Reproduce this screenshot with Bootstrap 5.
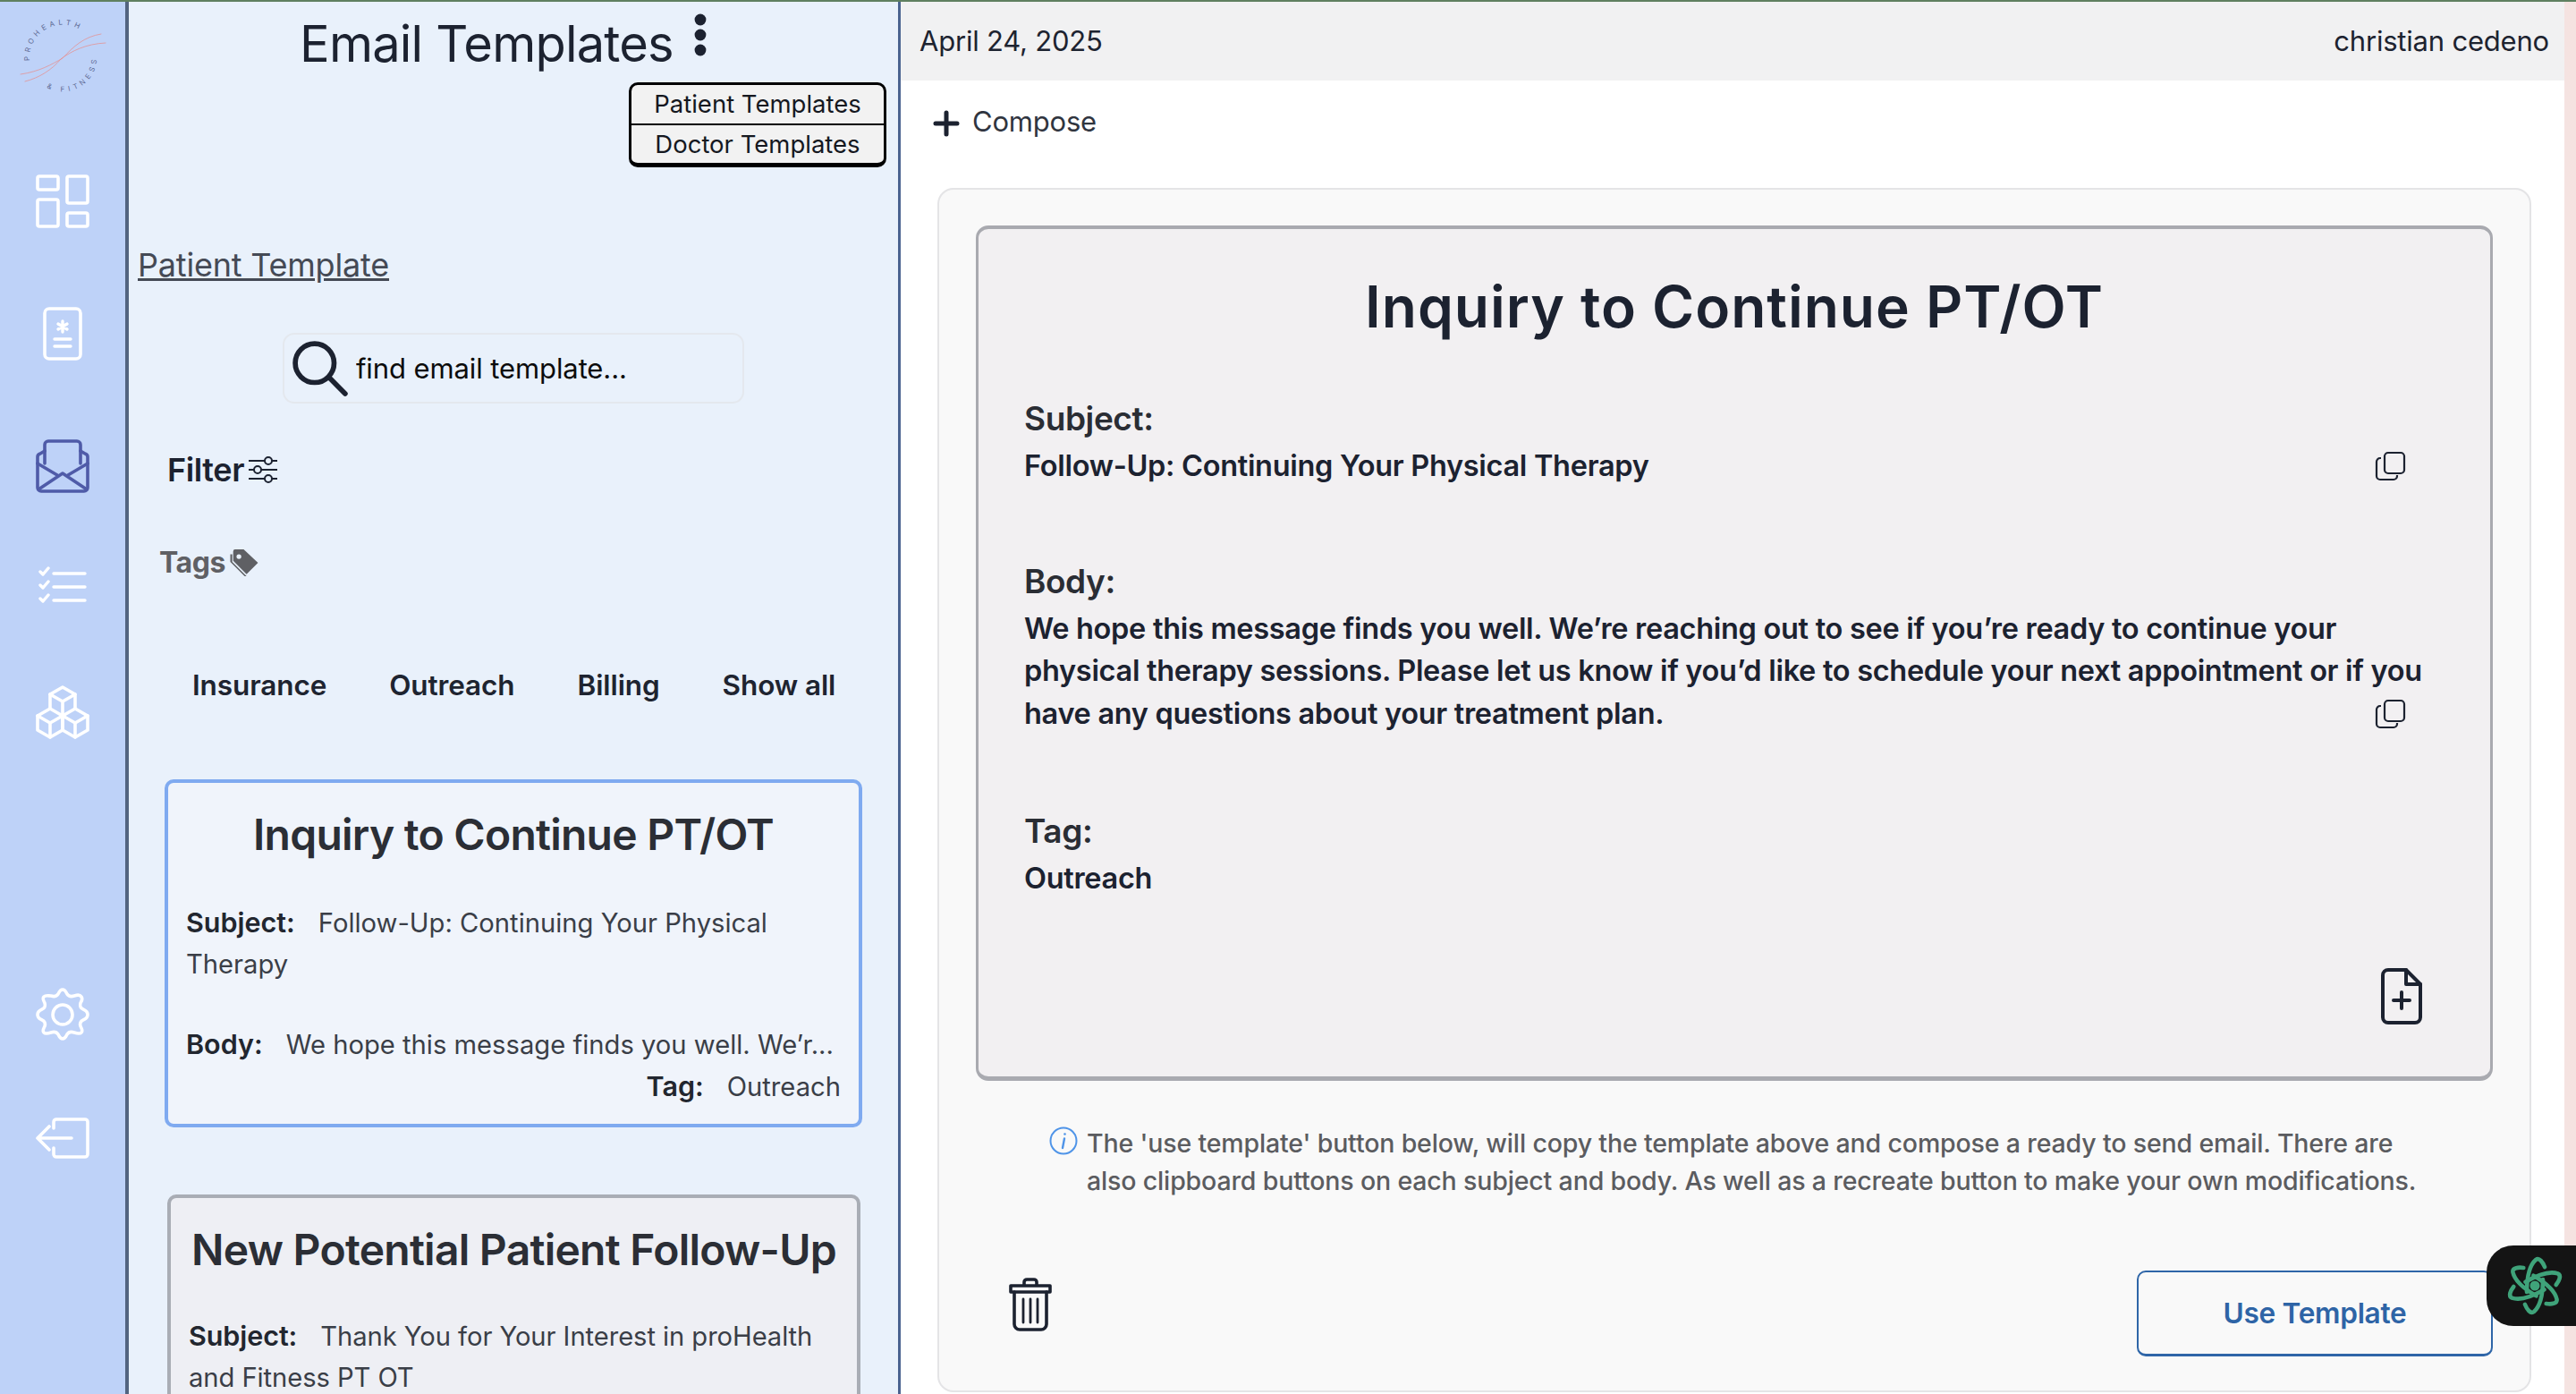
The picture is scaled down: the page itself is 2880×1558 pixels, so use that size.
<!DOCTYPE html>
<html lang="en">
<head>
<meta charset="utf-8">
<title>Email Templates</title>
<link href="https://cdn.jsdelivr.net/npm/bootstrap@5.3.0/dist/css/bootstrap.min.css" rel="stylesheet">
<style>
html,body{height:100%;margin:0;overflow:hidden}
body{font-family:Inter,"Liberation Sans",sans-serif;color:#1c2230;background:#fff}
.app-shell{height:1558px;border-top:2px solid #5f8060;overflow:hidden;position:relative}
.rail{width:144px;flex:none;background:#bed2f8;border-right:4px solid #536480;padding-top:20px;display:flex;flex-direction:column;align-items:center}
.rail svg{display:block;flex:none}
.rail .logo-mark{margin-bottom:88px;overflow:visible}
.rail .rail-icon{fill:none;stroke:#fff;stroke-width:3.6;stroke-linecap:round;stroke-linejoin:round;margin-bottom:88px}
.rail .rail-icon.is-active{stroke:#4f5ba8;margin-bottom:81px}
.rail .rail-gap{margin-bottom:278px}
.rail .rail-gear{margin-bottom:85px}
.middle{width:863px;flex:none;background:#e9f1fb;border-right:3px solid #4a6390;overflow:hidden;padding:0 12px 0 10px}
.page-title{font-size:56px;font-weight:400;line-height:66px;margin:14px 0 0;letter-spacing:-.8px}
.title-row{height:78px;padding-right:21px}
.dots{margin:13px 0 0 23px}
.tpl-menu{width:288px;margin:12px 0 0 549px;border:3px solid #000;border-bottom-width:5px;border-radius:10px;overflow:hidden;background:#f2f2f2}
.tpl-menu .list-group-item{background:transparent;border:0;border-radius:0;padding:0;height:43px;line-height:42px;text-align:center;font-size:27.5px;color:#15181f}
.tpl-menu .list-group-item+.list-group-item{border-top:2px solid #000;height:44px}
.section-link{display:inline-block;font-size:36px;line-height:46px;color:#454a55;margin-top:86px;letter-spacing:-.2px}
.finder{width:516px;height:79px;margin:53px 0 0 162px;border:2px solid #e4e8ee;border-radius:13px;padding-left:9px}
.finder svg{flex:none}
.finder input{border:0;background:transparent;box-shadow:none;font-size:31px;padding:0 0 0 9px;height:60px;color:#000;font-family:inherit;letter-spacing:-.1px}
.finder input::placeholder{color:#0c0c0c;opacity:1}
.finder input:focus{background:transparent;box-shadow:none}
.filter-label{font-size:36px;font-weight:600;line-height:44px;margin:52px 0 0 33px;letter-spacing:-.4px}
.tags-label{font-size:32px;font-weight:700;line-height:40px;color:#5f6064;margin:62px 0 0 24px;letter-spacing:-.4px}
.tag-row{margin:97px 0 0 61px;gap:70px;font-size:31.5px;font-weight:600;line-height:40px;color:#1e2430;letter-spacing:-.1px}
.tpl-card{border-radius:10px;border-width:4px;border-style:solid}
.tpl-card.sel{width:780px;height:389px;margin:85px 0 0 30px;border-color:#7faaf0;background:#f0f4fb}
.tpl-card.plain{width:775px;height:500px;margin:75px 0 0 33px;border-color:#a9adb5;background:#eeeff4}
.tpl-card h3{font-size:48px;font-weight:600;line-height:58px;color:#2b2e35;text-align:center;margin:29px 0 0;letter-spacing:-.75px;white-space:nowrap}
.tpl-lines{font-size:29.2px;line-height:46px;padding:0 20px;color:#3a3e47;margin-top:46px}
.tpl-card.plain .tpl-lines{margin-top:44px;letter-spacing:-.07px}
.tpl-lines b{font-size:30.5px;font-weight:600;color:#22262f;margin-right:26px}
.tpl-lines .gap-line{margin-top:43px}
.main-col{flex:1;min-width:0;background:#fff}
.edge-strip{width:13px;flex:none;background:#f5e3e1}
.top-strip{height:88px;flex:none;background:#f1f1f2;padding:0 17px 0 21px;font-size:31px;color:#1d2330;letter-spacing:-.2px}
.compose{height:92px;flex:none;padding-left:36px;font-size:31px;color:#30353f;letter-spacing:-.2px}
.compose svg{margin-right:14px;margin-top:4px}
.sheet{margin:28px 37px 0 41px;height:1346px;flex:none;background:#f9f9f9;border:2px solid #e4e4e6;border-radius:18px;padding:40px 41px 0 41px}
.sheet-inner{height:956px;background:#f2f0f2;border:3px solid #a9aab0;border-top-width:4px;border-bottom-width:5px;border-radius:14px;padding:0 51px;position:relative}
.sheet-title{font-size:64px;font-weight:600;line-height:78px;text-align:center;letter-spacing:1px;margin:48px 0 0;color:#1c2230}
.field-h{font-size:37px;font-weight:600;line-height:46px;color:#2a2d34;letter-spacing:-.4px}
.field-v{font-size:32.5px;font-weight:600;line-height:47.6px;color:#1c2230;letter-spacing:-.3px;margin-top:6px}
.gap-subject{margin-top:63px}
.gap-body{margin-top:82px}
.gap-tag{margin-top:85px}
.body-text{max-width:1570px}
.copy-a{flex:none;margin-left:auto;margin-right:42px}
.copy-b{position:absolute;right:42px;bottom:6px}
.recreate{position:absolute;right:76px;bottom:58px}
.info-note{margin:49px 0 0 82px;width:1542px;font-size:28.5px;font-weight:500;line-height:42px;color:#5b5c60;letter-spacing:-.15px}
.info-note svg{margin:2px 10px 0 0;flex:none}
.use-btn{width:398px;height:96px;font-size:31.6px;font-weight:600;border:2px solid #2f66a8;border-bottom-width:3px;border-radius:10px;color:#2e64a6;background:transparent;letter-spacing:-.3px}
.foot-row{margin-top:79px;padding-left:36px}
.assistant{position:absolute;right:0;top:1390px;width:100px;height:90px;background:#141414;border-radius:30px 0 0 30px;display:flex;align-items:center;padding-left:22px}
</style>
</head>
<body>
<div class="app-shell d-flex">
  <aside class="rail">
    <svg class="logo-mark" width="100" height="85" viewBox="-6 0 100 85">
      <defs>
        <path id="ringTop" d="M7 46A37 37 0 0 1 66 13"/>
        <path id="ringLow" d="M26 76A38 38 0 0 0 82 40"/>
      </defs>
      <g fill="none" stroke="#e58f8f" stroke-width="1" stroke-linecap="round" stroke-opacity=".75">
        <path d="M-3 61C18 58 32 50 44 43 56 30 68 19 87 16"/>
        <path d="M2 69C18 65 32 56 42 44 54 35 70 27 92 26"/>
      </g>
      <text font-family="Inter,sans-serif" font-size="8" fill="#5e6a95"><textPath href="#ringTop" textLength="80" lengthAdjust="spacing">PROHEALTH</textPath></text>
      <text font-family="Inter,sans-serif" font-size="8" fill="#5e6a95"><textPath href="#ringLow" textLength="76" lengthAdjust="spacing">&amp; FITNESS</textPath></text>
    </svg>
    <svg class="rail-icon" width="60" height="60" viewBox="0 0 60 60"><rect x="2" y="2" width="23" height="15" rx="2"/><rect x="35" y="2" width="23" height="30" rx="2"/><rect x="2" y="28" width="23" height="30" rx="2"/><rect x="35" y="43" width="23" height="15" rx="2"/></svg>
    <svg class="rail-icon" width="44" height="60" viewBox="0 0 44 60"><rect x="2" y="2" width="40" height="56" rx="5"/><path d="M22 16V28M17 19L27 25M27 19L17 25" stroke-width="3.4"/><path d="M13 36H31M13 44H31" stroke-width="3.4"/></svg>
    <svg class="rail-icon is-active" width="60" height="60" viewBox="0 0 60 60"><path d="M10 27V6a4 4 0 0 1 4-4h32a4 4 0 0 1 4 4v21"/><path d="M10 13 5 16a4 4 0 0 0-3 4v34a4 4 0 0 0 4 4h48a4 4 0 0 0 4-4V20a4 4 0 0 0-3-4l-5-3"/><path d="M2 27 24 40M58 27 36 40M3 56 30 38l27 18"/></svg>
    <svg class="rail-icon" width="54" height="46" viewBox="0 0 54 46"><path d="M2 7 5 10 11 3M2 22 5 25 11 18M2 37 5 40 11 33" stroke-width="3.4"/><path d="M17 9H52M17 24H52M17 39H52" stroke-width="3.4"/></svg>
    <svg class="rail-icon rail-gap" width="60" height="60" viewBox="0 0 60 60"><path d="M30 2 44 10V26L30 34 16 26V10Z"/><path d="M16 10 30 18 44 10M30 18V34"/><path d="M16 26 2 34V50L16 58 30 50V34"/><path d="M2 34 16 42 30 34M16 42V58"/><path d="M44 26 58 34V50L44 58 30 50V34"/><path d="M30 34 44 42 58 34M44 42V58"/></svg>
    <svg class="rail-icon rail-gear" width="60" height="60" viewBox="0 0 60 60"><circle cx="30" cy="30" r="11"/><path d="M30 2c3 0 4 3 5 5 2 3 5 3 8 2 3-1 6-2 8 1s0 5-1 7c-1 3 0 6 3 7 2 1 5 2 5 6s-3 5-5 6c-3 1-4 4-3 7 1 2 3 5 1 7s-5 1-8 0c-3-1-6-1-8 2-1 2-2 5-5 5s-4-3-5-5c-2-3-5-3-8-2-3 1-6 2-8 0s0-5 1-7c1-3 0-6-3-7-2-1-5-2-5-6s3-5 5-6c3-1 4-4 3-7-1-2-3-5-1-7s5-1 8-1c3 1 6 1 8-2 1-2 2-5 5-5Z"/></svg>
    <svg class="rail-icon" width="60" height="46" viewBox="0 0 60 46"><path d="M20 12V5a3 3 0 0 1 3-3h32a3 3 0 0 1 3 3v36a3 3 0 0 1-3 3H23a3 3 0 0 1-3-3v-7"/><path d="M40 23H2M15 10 2 23l13 13"/></svg>
  </aside>

  <section class="middle">
    <div class="title-row d-flex justify-content-center align-items-start">
      <h1 class="page-title">Email Templates</h1>
      <svg class="dots" width="14" height="48" viewBox="0 0 14 48" fill="#1c2230"><circle cx="7" cy="7" r="6.4"/><circle cx="7" cy="24" r="6.4"/><circle cx="7" cy="41" r="6.4"/></svg>
    </div>
    <ul class="list-group tpl-menu">
      <li class="list-group-item">Patient Templates</li>
      <li class="list-group-item">Doctor Templates</li>
    </ul>
    <a href="#" class="section-link">Patient Template</a>
    <div class="finder d-flex align-items-center">
      <svg width="62" height="62" viewBox="0 0 60 60" fill="none" stroke="#1c2230" stroke-linecap="round"><circle cx="24" cy="24" r="21" stroke-width="5.500"/><path d="M40 40 57 57" stroke-width="5.500"/></svg>
      <input class="form-control" type="text" placeholder="find email template...">
    </div>
    <div class="filter-label d-flex align-items-center gap-1">Filter
      <svg width="34" height="30" viewBox="0 0 34 30" fill="none" stroke="#1c2230" stroke-width="2"><path d="M1 5H19M27 5H33M1 15H7M15 15H33M1 25H19M27 25H33"/><circle cx="23" cy="5" r="4"/><circle cx="11" cy="15" r="4"/><circle cx="23" cy="25" r="4"/></svg>
    </div>
    <div class="tags-label d-flex align-items-center gap-1">Tags
      <svg width="35" height="32" viewBox="0 0 32 30" fill="#5f6064"><path d="M6 1H15L30 15 18 27 4 13V3A2 2 0 0 1 6 1ZM10 6a2.500 2.500 0 1 0 0 5 2.500 2.500 0 0 0 0-5Z" fill-rule="evenodd"/><path d="M1 6 1 14 16 29 18 29 3 14 3 6Z"/></svg>
    </div>
    <div class="tag-row d-flex">
      <span>Insurance</span><span>Outreach</span><span>Billing</span><span>Show all</span>
    </div>
    <article class="tpl-card sel">
      <h3>Inquiry to Continue PT/OT</h3>
      <div class="tpl-lines">
        <div><b>Subject:</b>Follow-Up: Continuing Your Physical Therapy</div>
        <div class="gap-line"><b>Body:</b>We hope this message finds you well. We’r...</div>
        <div class="text-end"><b>Tag:</b>Outreach</div>
      </div>
    </article>
    <article class="tpl-card plain">
      <h3>New Potential Patient Follow-Up</h3>
      <div class="tpl-lines">
        <div><b>Subject:</b>Thank You for Your Interest in proHealth and Fitness PT OT</div>
      </div>
    </article>
  </section>

  <main class="main-col d-flex flex-column">
    <div class="top-strip d-flex justify-content-between align-items-center">
      <span>April 24, 2025</span><span>christian cedeno</span>
    </div>
    <div class="compose d-flex align-items-center">
      <svg width="30" height="30" viewBox="0 0 30 30" stroke="#1c2230" stroke-width="5" stroke-linecap="round"><path d="M15 3V27M3 15H27"/></svg>Compose
    </div>
    <div class="sheet">
      <div class="sheet-inner">
        <h2 class="sheet-title">Inquiry to Continue PT/OT</h2>
        <div class="field-h gap-subject">Subject:</div>
        <div class="field-v d-flex align-items-center"><span>Follow-Up: Continuing Your Physical Therapy</span>
          <svg class="copy-a" width="36" height="34" viewBox="0 0 36 34" fill="none" stroke="#1c2230" stroke-width="2.200"><rect x="11" y="2" width="22" height="23" rx="4"/><path d="M7 8H6a4 4 0 0 0-4 4v16a4 4 0 0 0 4 4h15a4 4 0 0 0 4-4v-1"/></svg>
        </div>
        <div class="field-h gap-body">Body:</div>
        <div class="field-v position-relative"><div class="body-text">We hope this message finds you well. We’re reaching out to see if you’re ready to continue your physical therapy sessions. Please let us know if you’d like to schedule your next appointment or if you have any questions about your treatment plan.</div>
          <svg class="copy-b" width="36" height="34" viewBox="0 0 36 34" fill="none" stroke="#1c2230" stroke-width="2.200"><rect x="11" y="2" width="22" height="23" rx="4"/><path d="M7 8H6a4 4 0 0 0-4 4v16a4 4 0 0 0 4 4h15a4 4 0 0 0 4-4v-1"/></svg>
        </div>
        <div class="field-h gap-tag">Tag:</div>
        <div class="field-v">Outreach</div>
        <svg class="recreate" width="46" height="63" viewBox="0 0 46 63" fill="none" stroke="#1c2230" stroke-width="4" stroke-linejoin="round" stroke-linecap="round"><path d="M28 2H8a6 6 0 0 0-6 6v47a6 6 0 0 0 6 6h30a6 6 0 0 0 6-6V18Z"/><path d="M28 2V18H44"/><path d="M23 27V45M14 36H32"/></svg>
      </div>
      <div class="info-note d-flex">
        <svg width="32" height="32" viewBox="0 0 32 32" fill="none" stroke="#4f94e8" stroke-width="2"><circle cx="16" cy="16" r="14.500"/><path d="M17 13.500 15 24" stroke-width="2.400" stroke-linecap="round"/><circle cx="17.500" cy="8.500" r="1.300" fill="#4f94e8" stroke="none"/></svg>
        <span>The 'use template' button below, will copy the template above and compose a ready to send email. There are also clipboard buttons on each subject and body. As well as a recreate button to make your own modifications.</span>
      </div>
      <div class="foot-row d-flex justify-content-between align-items-start">
        <svg class="mt-2" width="50" height="60" viewBox="0 0 50 60" fill="none" stroke="#1c2230" stroke-width="3.600" stroke-linecap="round" stroke-linejoin="round"><path d="M3 9H47V16H3ZM18 9V5a3 3 0 0 1 3-3h8a3 3 0 0 1 3 3v4"/><path d="M7 16V52a6 6 0 0 0 6 6h24a6 6 0 0 0 6-6V16"/><path d="M17 24V50M25 24V50M33 24V50" stroke-width="2.800"/></svg>
        <button type="button" class="btn use-btn">Use Template</button>
      </div>
    </div>
  </main>
  <div class="edge-strip"></div>
  <div class="assistant">
    <svg width="64" height="68" viewBox="-32 -34 64 68" fill="none" stroke="#3fa37a" stroke-width="4.600" stroke-linecap="round">
      <circle r="5.500" fill="#3fa37a" stroke="none"/>
      <g id="swirl"><path d="M-9 7C-9 -6 -7 -22 1 -29 5 -32 9 -26 11 -21"/></g>
      <use href="#swirl" transform="rotate(60)"/><use href="#swirl" transform="rotate(120)"/><use href="#swirl" transform="rotate(180)"/><use href="#swirl" transform="rotate(240)"/><use href="#swirl" transform="rotate(300)"/>
    </svg>
  </div>
</div>
<script src="https://cdn.jsdelivr.net/npm/bootstrap@5.3.0/dist/js/bootstrap.bundle.min.js"></script>
</body>
</html>
